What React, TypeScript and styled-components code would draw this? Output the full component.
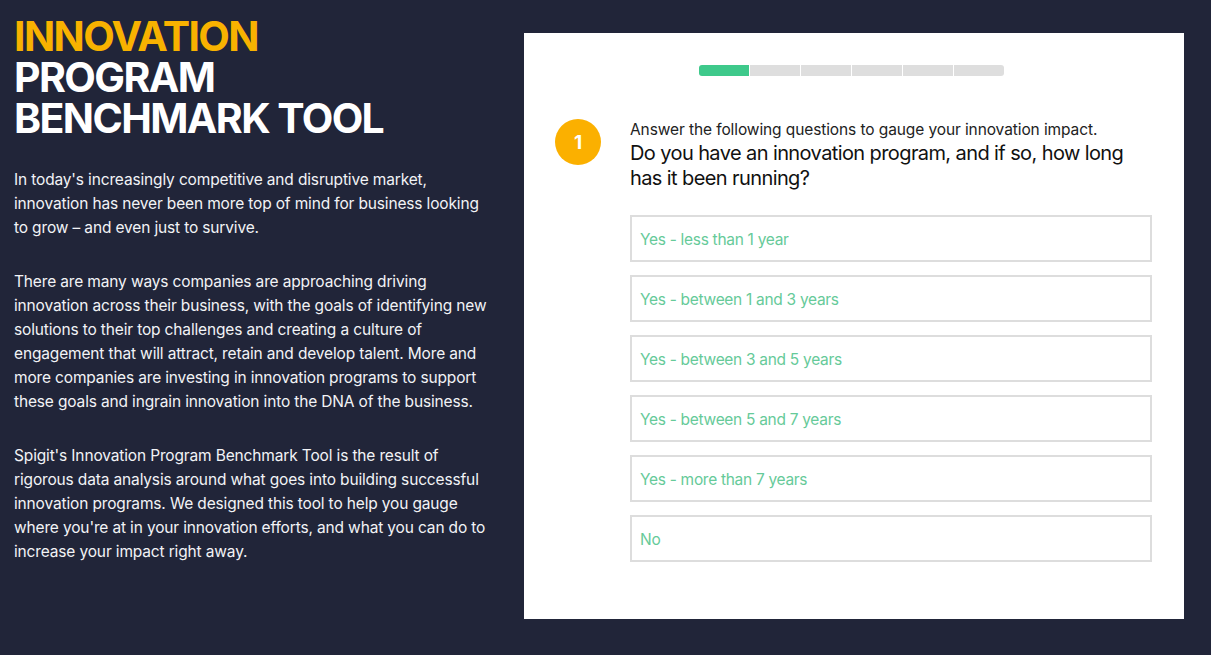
import React, { useState } from "react";
import styled, { createGlobalStyle } from "styled-components";

const GlobalStyle = createGlobalStyle`
  html, body {
    margin: 0;
    padding: 0;
    background-color: #212539;
  }
  body {
    font-family: Inter, "Liberation Sans", Arial, sans-serif;
  }
`;

const options = [
  "Yes - less than 1 year",
  "Yes - between 1 and 3 years",
  "Yes - between 3 and 5 years",
  "Yes - between 5 and 7 years",
  "Yes - more than 7 years",
  "No",
];

const paragraphs = [
  [
    "In today's increasingly competitive and disruptive market,",
    "innovation has never been more top of mind for business looking",
    "to grow \u2013 and even just to survive.",
  ],
  [
    "There are many ways companies are approaching driving",
    "innovation across their business, with the goals of identifying new",
    "solutions to their top challenges and creating a culture of",
    "engagement that will attract, retain and develop talent. More and",
    "more companies are investing in innovation programs to support",
    "these goals and ingrain innovation into the DNA of the business.",
  ],
  [
    "Spigit's Innovation Program Benchmark Tool is the result of",
    "rigorous data analysis around what goes into building successful",
    "innovation programs. We designed this tool to help you gauge",
    "where you're at in your innovation efforts, and what you can do to",
    "increase your impact right away.",
  ],
];

function App() {
  const [selected, setSelected] = useState<number | null>(null);
  const steps = 6;
  const current = 1;

  return (
    <>
      <GlobalStyle />
      <Page>
        <Intro>
          <Title>
            <TitleLine $accent>INNOVATION</TitleLine>
            <TitleLine>PROGRAM</TitleLine>
            <TitleLine>BENCHMARK TOOL</TitleLine>
          </Title>
          {paragraphs.map((lines, i) => (
            <Paragraph key={"p" + i}>
              {lines.map((line, j) => (
                <React.Fragment key={j}>
                  {line}
                  {j < lines.length - 1 && <br />}
                </React.Fragment>
              ))}
            </Paragraph>
          ))}
        </Intro>

        <Card>
          <Progress>
            {Array.from({ length: steps }).map((_, i) => (
              <Segment key={"s" + i} $done={i < current} />
            ))}
          </Progress>

          <Question>
            <StepBadge>1</StepBadge>
            <QuestionBody>
              <Hint>Answer the following questions to gauge your innovation impact.</Hint>
              <Prompt>
                Do you have an innovation program, and if so, how long
                <br />
                has it been running?
              </Prompt>
              <Options>
                {options.map((opt, i) => (
                  <Option
                    key={"o" + i}
                    $active={selected === i}
                    onClick={() => setSelected(i)}
                  >
                    {opt}
                  </Option>
                ))}
              </Options>
            </QuestionBody>
          </Question>
        </Card>
      </Page>
    </>
  );
}

const Page = styled.div`
  display: flex;
  align-items: flex-start;
  gap: 34px;
  padding: 16px 27px 36px 14px;
  min-height: 655px;
  box-sizing: border-box;
`;

const Intro = styled.div`
  width: 476px;
  flex-shrink: 0;
  color: #ffffff;
`;

const Title = styled.h1`
  margin: 0 0 29px;
  font-size: 41px;
  font-weight: 700;
  letter-spacing: -1.6px;
  color: #ffffff;
`;

const TitleLine = styled.div<{ $accent?: boolean }>`
  height: 41px;
  line-height: 41px;
  color: ${(p) => (p.$accent ? "#f8b200" : "#ffffff")};
`;

const Paragraph = styled.p`
  margin: 0 0 30px;
  font-size: 15.5px;
  line-height: 24px;
  letter-spacing: -0.15px;
  color: #f2f3f6;
  white-space: nowrap;
`;

const Card = styled.div`
  margin-top: 17px;
  width: 660px;
  height: 586px;
  flex-shrink: 0;
  background-color: #ffffff;
  box-sizing: border-box;
  padding: 32px 32px 0 31px;
`;

const Progress = styled.div`
  display: flex;
  gap: 1px;
  width: 305px;
  height: 11px;
  margin-left: 144px;
  border-radius: 3px;
  overflow: hidden;
`;

const Segment = styled.div<{ $done: boolean }>`
  flex: 1;
  background-color: ${(p) => (p.$done ? "#3ec98b" : "#dedede")};
`;

const Question = styled.div`
  display: flex;
  align-items: flex-start;
  gap: 29px;
  margin-top: 43px;
`;

const StepBadge = styled.div`
  width: 46px;
  height: 46px;
  flex-shrink: 0;
  border-radius: 50%;
  background-color: #fbb000;
  color: #ffffff;
  font-size: 19px;
  font-weight: 700;
  display: flex;
  align-items: center;
  justify-content: center;
`;

const QuestionBody = styled.div`
  flex: 1;
  min-width: 0;
`;

const Hint = styled.div`
  font-size: 15.5px;
  line-height: 22px;
  color: #222222;
  letter-spacing: -0.1px;
`;

const Prompt = styled.div`
  font-size: 20px;
  line-height: 25px;
  color: #111111;
  letter-spacing: -0.6px;
`;

const Options = styled.div`
  display: flex;
  flex-direction: column;
  gap: 13px;
  margin-top: 24px;
`;

const Option = styled.div<{ $active: boolean }>`
  height: 47px;
  box-sizing: border-box;
  border: 2px solid ${(p) => (p.$active ? "#3ec98b" : "#dddddd")};
  background-color: ${(p) => (p.$active ? "#f2fbf6" : "#ffffff")};
  display: flex;
  align-items: center;
  padding: 1px 8px 0;
  font-size: 15.5px;
  letter-spacing: -0.3px;
  color: #66ca99;
  cursor: pointer;
`;

export default App;
